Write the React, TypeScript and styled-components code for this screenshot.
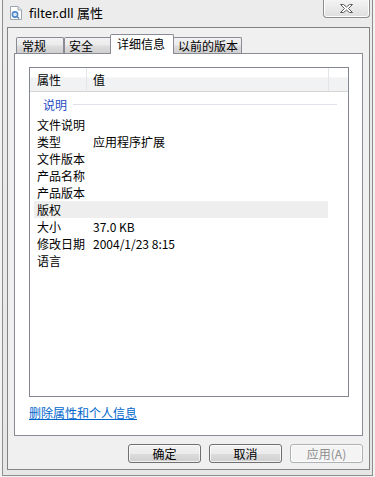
import styled, { createGlobalStyle } from "styled-components";

const GlobalStyle = createGlobalStyle`
  html, body {
    margin: 0;
    padding: 0;
    background: #f2f2f2;
  }
  body {
    font-family: "Noto Sans CJK SC", "Noto Sans", sans-serif;
    font-size: 12px;
    color: #000;
  }
  * {
    box-sizing: border-box;
  }
`;

const Window = styled.div`
  width: 371px;
  height: 476px;
  margin-left: 2px;
  display: flex;
  flex-direction: column;
  background: linear-gradient(180deg, #ececec 0%, #e6e6e6 100%);
  border: 1px solid #8e8e8e;
  border-top: none;
`;

const TitleBar = styled.div`
  height: 27px;
  flex: 0 0 27px;
  display: flex;
  align-items: flex-start;
  padding-left: 7px;
`;

const TitleIcon = styled.svg`
  margin-top: 6px;
  flex: 0 0 auto;
`;

const Title = styled.div`
  margin-left: 7px;
  font-family: "Noto Sans", "Noto Sans CJK SC", sans-serif;
  font-size: 13px;
  line-height: 26px;
  color: #000;
`;

const CloseButton = styled.div`
  margin-left: auto;
  margin-right: 2px;
  width: 47px;
  height: 18px;
  display: flex;
  align-items: center;
  justify-content: center;
  border: 1px solid #8d8d8d;
  border-top: none;
  border-radius: 0 0 4px 4px;
  background: linear-gradient(180deg, #f4f4f4 0%, #e9e9e9 50%, #dedede 100%);
  box-shadow: inset 0 -1px 0 #ffffff, inset 1px 0 0 #ffffff, inset -1px 0 0 #ffffff;
`;

const Client = styled.div`
  margin: 0 2px 0 4px;
  height: 443px;
  flex: 0 0 443px;
  border: 1px solid #848484;
  background: #f0f0f0;
  display: flex;
  flex-direction: column;
  padding: 6px 6px 0 6px;
`;

const TabStrip = styled.div`
  display: flex;
  align-items: flex-end;
  height: 20px;
  flex: 0 0 20px;
  padding-left: 2px;
  margin-bottom: -1px;
  position: relative;
  z-index: 1;
`;

const Tab = styled.div<{ $active?: boolean; $w: number; $pad: number }>`
  width: ${(p) => p.$w}px;
  height: ${(p) => (p.$active ? 20 : 16)}px;
  margin: ${(p) => (p.$active ? "0 -1px 0 -2px" : "0 0 1px 0")};
  padding-left: ${(p) => p.$pad}px;
  border: 1px solid #898c95;
  border-bottom: none;
  border-radius: 2px 2px 0 0;
  background: ${(p) =>
    p.$active
      ? "#ffffff"
      : "linear-gradient(180deg, #f3f3f3 0%, #ebebeb 45%, #dddddd 55%, #cfcfcf 100%)"};
  font-size: 12px;
  line-height: ${(p) => (p.$active ? "17px" : "15px")};
  white-space: nowrap;
  position: relative;
  z-index: ${(p) => (p.$active ? 2 : 0)};
`;

const Panel = styled.div`
  height: 383px;
  flex: 0 0 383px;
  border: 1px solid #898c95;
  background: #ffffff;
  display: flex;
  flex-direction: column;
  padding: 13px 13px 0 14px;
`;

const ListView = styled.div`
  height: 330px;
  flex: 0 0 330px;
  border: 1px solid #828790;
  display: flex;
  flex-direction: column;
  background: #fff;
`;

const Header = styled.div`
  height: 24px;
  flex: 0 0 24px;
  display: flex;
  border-bottom: 1px solid #d5d5d5;
  background: linear-gradient(180deg, #ffffff 0%, #ffffff 40%, #f1f2f4 42%, #f1f2f4 100%);
`;

const HeaderCell = styled.div<{ $w?: number; $pad?: number }>`
  ${(p) => (p.$w ? `width: ${p.$w}px; flex: 0 0 ${p.$w}px;` : "flex: 1;")}
  padding-left: ${(p) => p.$pad ?? 0}px;
  border-right: ${(p) => (p.$w ? "1px solid #e3e5e8" : "none")};
  line-height: 23px;
  font-size: 12px;
`;

const GroupRow = styled.div`
  height: 24px;
  flex: 0 0 24px;
  display: flex;
  align-items: center;
  gap: 6px;
  padding: 0 11px 0 13px;
  color: #1f4bc4;
  font-size: 12px;
`;

const GroupLine = styled.div`
  flex: 1;
  height: 1px;
  background: #dfe3e9;
`;

const Row = styled.div<{ $hl?: boolean }>`
  height: 17px;
  flex: 0 0 17px;
  width: 294px;
  margin-left: 4px;
  display: flex;
  align-items: center;
  background: ${(p) => (p.$hl ? "#eeeeee" : "transparent")};
  font-size: 12px;
  line-height: 17px;
`;

const NameCell = styled.div`
  width: 59px;
  flex: 0 0 59px;
  padding-left: 3px;
  white-space: nowrap;
`;

const ValueCell = styled.div`
  flex: 1;
  white-space: nowrap;
`;

const Link = styled.a`
  margin-top: 9px;
  align-self: flex-start;
  color: #0066cc;
  text-decoration: underline;
  font-size: 12px;
  line-height: 14px;
  cursor: pointer;
`;

const ButtonRow = styled.div`
  display: flex;
  justify-content: flex-end;
  gap: 8px;
  margin-top: 8px;
`;

const Button = styled.button<{ $disabled?: boolean }>`
  width: 73px;
  height: 19px;
  padding: 0;
  border-radius: 3px;
  font-family: "Noto Sans CJK SC", "Noto Sans", sans-serif;
  font-size: 12px;
  line-height: 17px;
  border: 1px solid ${(p) => (p.$disabled ? "#adb2b5" : "#707070")};
  color: ${(p) => (p.$disabled ? "#8d8d8d" : "#000")};
  background: ${(p) =>
    p.$disabled
      ? "#f4f4f4"
      : "linear-gradient(180deg, #f2f2f2 0%, #ebebeb 50%, #dddddd 51%, #cfcfcf 100%)"};
  box-shadow: inset 0 0 0 1px rgba(255, 255, 255, 0.7);
`;

const rows: { name: string; value?: string; hl?: boolean }[] = [
  { name: "文件说明" },
  { name: "类型", value: "应用程序扩展" },
  { name: "文件版本" },
  { name: "产品名称" },
  { name: "产品版本" },
  { name: "版权", hl: true },
  { name: "大小", value: "37.0 KB" },
  { name: "修改日期", value: "2004/1/23 8:15" },
  { name: "语言" },
];

const tabs = [
  { label: "常规", w: 48, pad: 5 },
  { label: "安全", w: 48, pad: 4 },
  { label: "详细信息", w: 64, pad: 6, active: true },
  { label: "以前的版本", w: 69, pad: 4 },
];

export default function App() {
  return (
    <>
      <GlobalStyle />
      <Window>
        <TitleBar>
          <TitleIcon width="12" height="14" viewBox="0 0 12 14">
            <path d="M0.5 0.5 H8 L11.5 4 V13.5 H0.5 Z" fill="#fff" stroke="#9ba5af" />
            <path d="M8 0.5 V4 H11.5" fill="#e6eaee" stroke="#9ba5af" />
            <circle cx="5" cy="8.5" r="2.6" fill="none" stroke="#4b86c6" strokeWidth="1.6" />
            <circle cx="5" cy="8.5" r="1" fill="#b6d2ee" />
            <path d="M7 10.5 L9 12.5" stroke="#5a7fa8" strokeWidth="1.4" />
          </TitleIcon>
          <Title>filter.dll 属性</Title>
          <CloseButton>
            <svg width="13" height="9" viewBox="0 0 13 9">
              <path
                d="M0.5 0.5 H3.5 L6.5 3 L9.5 0.5 H12.5 L8.5 4.5 L12.5 8.5 H9.5 L6.5 6 L3.5 8.5 H0.5 L4.5 4.5 Z"
                fill="#ffffff"
                stroke="#5c5c5c"
                strokeWidth="1"
              />
            </svg>
          </CloseButton>
        </TitleBar>
        <Client>
          <TabStrip>
            {tabs.map((t) => (
              <Tab key={t.label} $active={t.active} $w={t.w} $pad={t.pad}>
                {t.label}
              </Tab>
            ))}
          </TabStrip>
          <Panel>
            <ListView>
              <Header>
                <HeaderCell $w={57} $pad={7}>
                  属性
                </HeaderCell>
                <HeaderCell $w={242} $pad={6}>
                  值
                </HeaderCell>
                <HeaderCell />
              </Header>
              <GroupRow>
                说明
                <GroupLine />
              </GroupRow>
              {rows.map((r) => (
                <Row key={r.name} $hl={r.hl}>
                  <NameCell>{r.name}</NameCell>
                  <ValueCell>{r.value}</ValueCell>
                </Row>
              ))}
            </ListView>
            <Link>删除属性和个人信息</Link>
          </Panel>
          <ButtonRow>
            <Button>确定</Button>
            <Button>取消</Button>
            <Button $disabled>应用(A)</Button>
          </ButtonRow>
        </Client>
      </Window>
    </>
  );
}
